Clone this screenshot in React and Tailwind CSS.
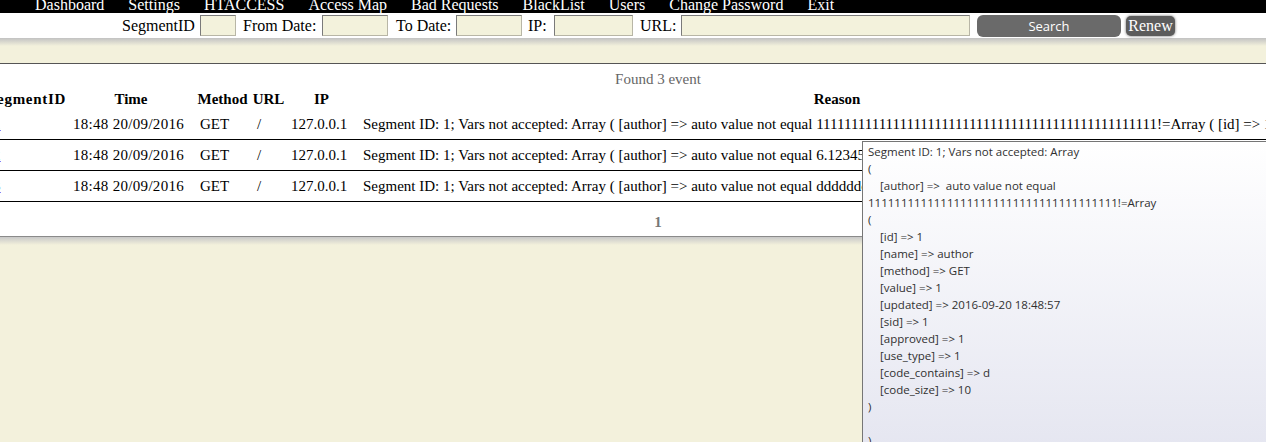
import React from 'react';

const navItems = ['Dashboard', 'Settings', 'HTACCESS', 'Access Map', 'Bad Requests', 'BlackList', 'Users', 'Change Password', 'Exit'];

const ones = '1'.repeat(49);

const rows = [
  { id: 1, reason: `Segment ID: 1; Vars not accepted: Array ( [author] => auto value not equal ${ones}!=Array ( [id] => 1 [name] => author [method] => GET [value] => 1 )` },
  { id: 2, reason: 'Segment ID: 1; Vars not accepted: Array ( [author] => auto value not equal 6.123456789!=Array ( [id] => 1 [name] => author [method] => GET [value] => 1 )' },
  { id: 3, reason: 'Segment ID: 1; Vars not accepted: Array ( [author] => auto value not equal dddddddddd!=Array ( [id] => 1 [name] => author [method] => GET [value] => 1 )' },
];

// lineas del tooltip: [sangria, texto]
const tipLines = [
  [false, 'Segment ID: 1; Vars not accepted: Array'],
  [false, '('],
  [true, '[author] =>  auto value not equal'],
  [false, `${'1'.repeat(38)}!=Array`],
  [false, '('],
  [true, '[id] => 1'],
  [true, '[name] => author'],
  [true, '[method] => GET'],
  [true, '[value] => 1'],
  [true, '[updated] => 2016-09-20 18:48:57'],
  [true, '[sid] => 1'],
  [true, '[approved] => 1'],
  [true, '[use_type] => 1'],
  [true, '[code_contains] => d'],
  [true, '[code_size] => 10'],
  [false, ')'],
  [false, ' '],
  [false, ')'],
];

const inputCls = 'h-[21px] bg-[#f3f2dc] border border-[#b8b6a6] border-t-[#7a7a7a] border-l-[#7a7a7a]';

const FilterBar = () => (
  <div className="h-[25px] bg-white flex items-center text-[16px] leading-[20px] text-black">
    <span className="pl-[122px] w-[200px]">SegmentID</span>
    <div className={`${inputCls} w-[36px]`} />
    <span className="w-[86px] pl-[7px]">From Date:</span>
    <div className={`${inputCls} w-[66px]`} />
    <span className="w-[68px] pl-[8px]">To Date:</span>
    <div className={`${inputCls} w-[66px]`} />
    <span className="w-[32px] pl-[6px]">IP:</span>
    <div className={`${inputCls} w-[79px]`} />
    <span className="w-[48px] pl-[7px]">URL:</span>
    <div className={`${inputCls} w-[289px]`} />
    <button className="ml-[7px] w-[144px] h-[22px] rounded-[6px] bg-[#6a6a6a] text-white text-[13px] font-['Open_Sans',sans-serif]">
      Search
    </button>
    <button className="ml-[5px] w-[49px] h-[20px] rounded-[5px] bg-[#5c5c5c] text-white text-[16px] leading-[18px] shadow-[0_0_3px_rgba(0,0,0,0.6)]">
      Renew
    </button>
  </div>
);

const cols = 'grid grid-cols-[88px_126px_57px_35px_71px_960px]';

const EventTable = () => (
  <div className="bg-white border-t border-[#555] border-b border-b-[#8a8a8a] text-[15px] pt-[5px] pb-[4px]">
    <p className="text-center leading-[20px] text-[#666] pl-[50px]">Found 3 event</p>
    <div className="ml-[-20px] w-[1337px]">
      <div className={`${cols} h-[20px] leading-[20px] font-bold text-center whitespace-nowrap`}>
        <span className="text-right pr-[2px] tracking-[0.7px]">SegmentID</span>
        <span>Time</span>
        <span>Method</span>
        <span>URL</span>
        <span>IP</span>
        <span>Reason</span>
      </div>
      {rows.map((r) => (
        <div key={r.id} className={`${cols} h-[31px] leading-[30px] border-b border-black whitespace-nowrap`}>
          <span className="pl-[13px]">
            <a href="#" className="text-[#0000ee] underline">{r.id}</a>
          </span>
          <span className="pl-[5px] tracking-[0.3px]">18:48 20/09/2016</span>
          <span className="pl-[6px]">GET</span>
          <span className="pl-[6px]">/</span>
          <span className="pl-[5px]">127.0.0.1</span>
          <span className="pl-[6px]">{r.reason}</span>
        </div>
      ))}
    </div>
    <p className="mt-[10px] text-center leading-[20px] font-bold text-[#777] pl-[50px]">1</p>
  </div>
);

export default function App() {
  return (
    <div className="relative w-[1266px] h-[442px] overflow-hidden bg-[#f3f1dc] font-['Liberation_Serif',serif]">
      <div className="h-[13px] bg-black overflow-hidden">
        <div className="flex gap-[24px] pl-[35px] mt-[-5px] text-white text-[16px] leading-[20px] whitespace-nowrap">
          {navItems.map((item) => (
            <span key={item}>{item}</span>
          ))}
        </div>
      </div>
      <FilterBar />
      <div className="h-[8px] bg-gradient-to-b from-[#c2c2c2] to-[#f3f1dc]" />
      <div className="h-[17px]" />
      <EventTable />
      <div className="h-[8px] bg-gradient-to-b from-[#c8c8c8] to-[#f3f1dc]" />

      {/* tooltip nativo sobre la fila */}
      <div className="absolute left-[862px] top-[141px] w-[420px] h-[320px] border border-[#767676] bg-gradient-to-b from-white to-[#e4e5f0] pt-[1px] pl-[5px] text-[11.5px] leading-[17px] text-[#303030] font-['Open_Sans',sans-serif]">
        {tipLines.map(([indent, text], i) => (
          <div key={i} className={`whitespace-pre ${indent ? 'pl-[12px]' : ''}`}>{text}</div>
        ))}
      </div>
    </div>
  );
}
